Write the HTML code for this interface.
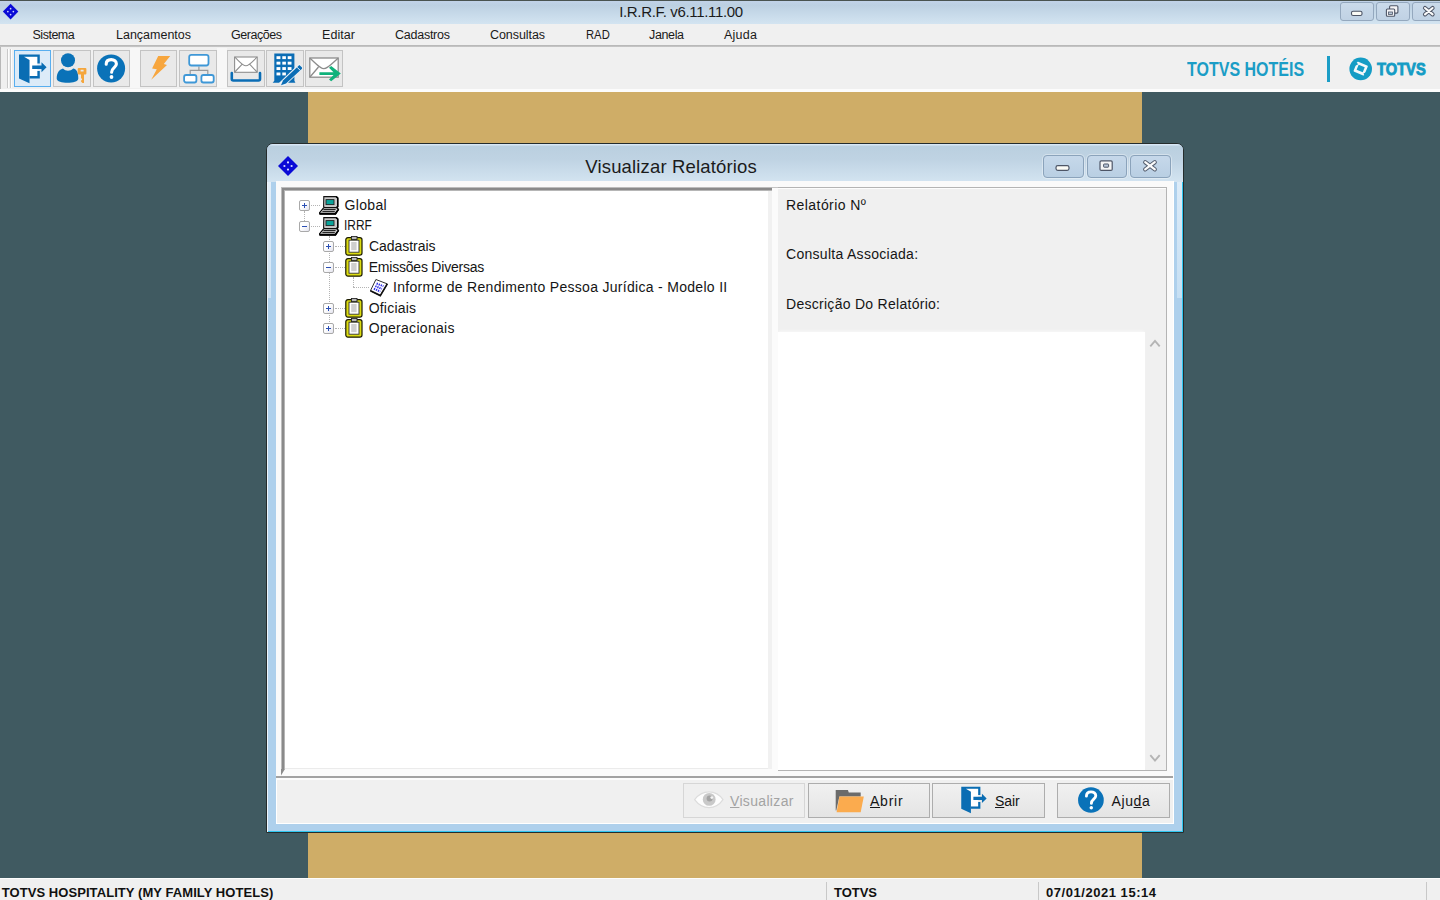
<!DOCTYPE html>
<html lang="pt-BR">
<head>
<meta charset="utf-8">
<title>I.R.R.F. v6.11.11.00</title>
<style>
*{box-sizing:border-box;margin:0;padding:0}
html,body{width:1440px;height:900px;overflow:hidden}
body{position:relative;background:#405a61;font-family:"Liberation Sans",sans-serif;color:#111;font-size:12px}
.abs{position:absolute}
.t{position:absolute;white-space:nowrap;line-height:1}
/* main title bar */
#topline{left:0;top:0;width:1440px;height:1px;background:#49534f}
#titlebar{left:0;top:1px;width:1440px;height:23px;background:linear-gradient(#c1d2e8 0%,#bcd0e1 18%,#c5d8e8 50%,#d3e4f1 100%)}
#apptitle{left:619.2px;top:4.4px;font-size:15px;color:#1b1b1b;letter-spacing:-.34px}
.cap{position:absolute;top:2px;height:19px;border:1px solid #94a8be;border-radius:3px;background:linear-gradient(#cadaea,#c0d2e4)}
/* menu */
#menubar{left:0;top:24px;width:1440px;height:22px;background:#f0f0f0}
#menubar .t{top:4.7px;font-size:12.5px;color:#1a1a1a}
#menusep{left:0;top:45px;width:1440px;height:2px;background:linear-gradient(#b4b4b4,#c9c9c9)}
#menusep2{left:0;top:47px;width:1440px;height:1px;background:#f8f8f8}
/* toolbar */
#toolbar{left:0;top:47px;width:1440px;height:42px;background:#f0f0f0}
#toolwhite{left:0;top:89px;width:1440px;height:3px;background:#fcfcfc}
.tb{position:absolute;top:3px;height:37px;width:37px;border:1px solid #c3c3c3;background:#e9e9e9}
.tb svg{position:absolute;left:0;top:0}
/* mdi */
#gold{left:308px;top:92px;width:834px;height:786px;background:#cfad67}
/* status */
#status{left:0;top:878px;width:1440px;height:22px;background:#f0f0f0;border-top:1px solid #fdfdfd}
#status .t{top:7px;font-size:13px;font-weight:bold;color:#111}
.ssep{position:absolute;top:3px;width:1px;height:19px;background:#c8c8c8}
/* dialog */
#dlg{left:266px;top:143px;width:918px;height:690px;border:1px solid #252c2c;border-radius:7px 7px 0 0;background:#aed0ec;overflow:hidden}
#dlgtitle{left:0;top:0;width:916px;height:38px;background:linear-gradient(#d8e7f5 0,#d8e7f5 1px,#bacfdf 2px,#bfd3e3 40%,#d3e4f1 100%)}
#dlgcap{left:585.3px;top:158px;font-size:18.5px;color:#1b1b1b;letter-spacing:.16px}
#client{left:9px;top:37px;width:898px;height:643px;background:#f0f0f0;border:1px solid #fff}
#toppanel{left:276px;top:181px;width:897px;height:595px;background:#fafafa}

/* tree */
#tree{left:281px;top:187px;width:491px;height:589px;background:#fff;border-style:solid;border-width:0 0 7px 0;border-color:#fbfbfb;box-shadow:inset 1px 1px 0 #bcbcbc,inset 3px 3px 0 #8a8a8a,inset 4px 4px 0 #b6b6b6}
#split{left:772px;top:187px;width:6px;height:589px;background:#fbfbfb}
.tx{position:absolute;white-space:nowrap;line-height:1;font-size:14px;color:#151515}
.eb{position:absolute;width:11px;height:11px;border:1px solid #a9a9a9;border-radius:2px;background:linear-gradient(135deg,#fff 40%,#e4e4ee)}
.eb:before{content:"";position:absolute;left:2px;top:4px;width:5px;height:1px;background:#2b4fb4}
.eb.p:after{content:"";position:absolute;left:4px;top:2px;width:1px;height:5px;background:#2b4fb4}
.dh{position:absolute;height:0;border-top:1px dotted #b4b4b4}
.dv{position:absolute;width:0;border-left:1px dotted #b4b4b4}
/* right */
#rp{left:778px;top:187px;width:389px;height:583.5px;background:#f0f0f0;border:1px solid #b4b4b4;border-left:none;box-shadow:inset 0 1px 0 #fdfdfd}
#memo{left:778px;top:331.5px;width:367px;height:438px;background:#fff;box-shadow:0 -2px 2px -1px #f8f8f8}
#hsep{left:276px;top:776px;width:897px;height:2px;background:#a2a2a2}
#hsep2{left:276px;top:778px;width:897px;height:2px;background:#fcfcfc}
/* buttons */
.btn{position:absolute;top:783px;height:35px;border:1px solid #adadad;background:linear-gradient(#f1f1f1,#e4e4e4)}
.btn.dis{border-color:#d6d6d6;background:#efefef}
.btn .tx{top:auto}

#lg1{left:1187px;top:12px;font-size:20px;font-weight:bold;color:#1b9dc6;transform-origin:0 0;transform:scaleX(.8)}
#lg2{left:1377px;top:14px;font-size:16.5px;font-weight:bold;color:#149cc5;-webkit-text-stroke:.9px #149cc5;transform-origin:0 0;transform:scaleX(.89)}
.gl{position:absolute}

.dcap{position:absolute;top:154.5px;width:40.5px;height:23px;border:1px solid #8ba3bb;border-radius:4px;background:linear-gradient(#c6d8ea,#b9cfe3);box-shadow:0 0 0 1px rgba(255,255,255,.35)}
</style>
</head>
<body>
<div class="abs" id="topline"></div>
<div class="abs" id="titlebar"></div>
<svg class="abs" style="left:1.9px;top:2.6px" width="17.2" height="17.2" viewBox="0 0 20 20"><path d="M10 .8L19 10L10 19.2L1 10Z" fill="#0a0ad6"/><g fill="#cfd6ff"><circle cx="10" cy="6.6" r="1"/><circle cx="6.8" cy="10" r="1"/><circle cx="13.2" cy="10" r="1"/><circle cx="10" cy="13.4" r="1"/></g></svg>
<div class="t" id="apptitle">I.R.R.F. v6.11.11.00</div>

<div class="cap" style="left:1340px;width:34px"></div>
<div class="cap" style="left:1376px;width:34px"></div>
<div class="cap" style="left:1412px;width:34px"></div>
<svg class="abs" style="left:1340px;top:2px" width="100" height="19" viewBox="1340 2 100 19">
<rect x="1351.5" y="11.2" width="10.5" height="4.3" rx="1.6" fill="#fbfbf6" stroke="#4d5566" stroke-width="1.1"/>
<g fill="#f4f4f6" stroke="#4d5566" stroke-width="1.1"><rect x="1389.6" y="5.8" width="8.3" height="7.3" rx="1"/><rect x="1386.4" y="9" width="8.3" height="7.3" rx="1"/></g><rect x="1388.6" y="12" width="3.9" height="2.4" fill="#b9c6d8" stroke="#4d5566" stroke-width=".8"/>
<path d="M1425 8L1432.6 14.4M1432.6 8L1425 14.4" stroke="#4d5566" stroke-width="4.1" stroke-linecap="round"/><path d="M1425 8L1432.6 14.4M1432.6 8L1425 14.4" stroke="#fbfbfb" stroke-width="2.1" stroke-linecap="round"/>
</svg>
<div class="abs" id="menubar">
<span class="t" style="left:32.5px;letter-spacing:-0.49px">Sistema</span>
<span class="t" style="left:116px">Lançamentos</span>
<span class="t" style="left:231px;letter-spacing:-0.46px">Gerações</span>
<span class="t" style="left:322px;letter-spacing:0.07px">Editar</span>
<span class="t" style="left:395px;letter-spacing:-0.25px">Cadastros</span>
<span class="t" style="left:490px;letter-spacing:-0.07px">Consultas</span>
<span class="t" style="left:585.7px;transform-origin:0 0;transform:scaleX(0.9)">RAD</span>
<span class="t" style="left:649px;letter-spacing:-0.37px">Janela</span>
<span class="t" style="left:724px;letter-spacing:0.25px">Ajuda</span>
</div>
<div class="abs" id="menusep"></div>
<div class="abs" id="menusep2"></div>
<div class="abs" id="toolbar">
<i class="abs" style="left:0;top:0;width:1px;height:42px;background:#b8b8b8"></i>
<i class="abs" style="left:7px;top:2px;width:2px;height:39px;background:linear-gradient(90deg,#c9c9c9 50%,#fdfdfd 50%)"></i>
<i class="abs" style="left:10px;top:2px;width:2px;height:39px;background:linear-gradient(90deg,#c9c9c9 50%,#fdfdfd 50%)"></i>
<div class="tb" style="left:13.9px;width:37.10px;border-color:#58aeef;background:#dcebf8">
<svg style="left:0px" width="35" height="35" viewBox="1 1 35 35"><g fill="#0a6db3"><path d="M10 6.8H23.4V26H15.5V10Z" fill="#fff"/><path d="M5 4.5H25.8V13.5H23.4V6.8H10L15.5 10V33.3L5 28.4Z"/><path d="M23.4 21.1H25.8V28.4H15.5V26H23.4Z"/><path d="M18.2 15.5H27.5V12.3L32.6 17.3L27.5 22.2V19H18.2Z"/></g></svg>
</div>
<div class="tb" style="left:53.25px;width:37.45px">
<svg style="left:1px" width="35" height="35" viewBox="1 1 35 35"><circle cx="14" cy="10.3" r="7" fill="#0a72b8"/><path d="M2.7 28.5C2.7 22 6 19.5 9 18.6C10.5 20.2 12 20.8 14 20.8C16 20.8 17.7 20.2 19.2 18.6C22 19.4 24.3 21 24.3 28.5C24.3 31.5 19 32.8 13.5 32.8C8 32.8 2.7 31.5 2.7 28.5Z" fill="#0a72b8"/><path d="M24.7 18H31.4Q32.4 18 32.4 19V23.6Q32.4 24.6 31.4 24.6H30V33H28.4L27 31.6V30.2H28V28.6H27V24.6H24.7Q23.7 24.6 23.7 23.6V19Q23.7 18 24.7 18ZM26.6 19.8V21.6H29.6V19.8Z" fill="#f5a63c" fill-rule="evenodd"/></svg>
</div>
<div class="tb" style="left:92.6px;width:37.00px">
<svg style="left:0px" width="35" height="35" viewBox="1 1 35 35"><circle cx="18.1" cy="18.5" r="14" fill="#0a72b8"/><path d="M13.2 14.3C13.2 11 15.5 9.6 18.2 9.6C21.2 9.6 23.4 11.3 23.4 14C23.4 17.6 18.6 17.8 18.6 22.2" fill="none" stroke="#fff" stroke-width="3.1" stroke-linecap="round"/><circle cx="18.5" cy="27" r="1.9" fill="#fff"/></svg>
</div>
<i class="abs" style="left:130px;top:1px;width:10px;height:40px;background:#f7f7f7"></i><i class="abs" style="left:217px;top:1px;width:10px;height:40px;background:#f7f7f7"></i>
<div class="tb" style="left:140.0px;width:37.20px">
<svg style="left:0.5px" width="35" height="35" viewBox="1 1 35 35"><path d="M17.2 5.9H29.2L22.8 14.1L26 15L10.2 29.8L15.8 19.3L11.1 18.5Z" fill="#f7a63e"/></svg>
</div>
<div class="tb" style="left:179.0px;width:37.50px">
<svg style="left:0.5px" width="35" height="35" viewBox="1 1 35 35"><path d="M18.9 16.4V20.3M10.2 24.1V20.3H27.8V24.1" fill="none" stroke="#9a9a9a" stroke-width="1.2"/><g fill="#fff" stroke="#3f98d7" stroke-width="1.8"><rect x="9.2" y="4.9" width="19.3" height="10.6" rx="2.2"/><rect x="4.1" y="25" width="12.3" height="7.5" rx="2"/><rect x="21.4" y="25" width="12.3" height="7.5" rx="2"/></g></svg>
</div>
<div class="tb" style="left:226.9px;width:37.80px">
<svg style="left:0.4px" width="35" height="35" viewBox="1 1 35 35"><rect x="7.6" y="7" width="22.6" height="15.3" fill="#fff" stroke="#8f8f8f" stroke-width="1.1"/><path d="M7.8 7.2C12 11 15.5 15.8 18.9 15.8C22.3 15.8 26 11 30 7.2M7.8 22L15 14.3M30 22L22.8 14.3" fill="none" stroke="#8f8f8f" stroke-width="1.1"/><path d="M4.8 23V29Q4.8 30.5 6.3 30.5H31.5Q33 30.5 33 29V23" fill="none" stroke="#0b6db5" stroke-width="2.6" stroke-linecap="round"/></svg>
</div>
<div class="tb" style="left:265.9px;width:38.40px">
<svg style="left:0.4px" width="35" height="35" viewBox="1 1 35 35"><path d="M8.3 3.4H28.4V30.8L29.4 32.7H6.7L8.3 30.8Z" fill="#0b6db5"/><g fill="#fff"><rect x="10.5" y="6.2" width="3.9" height="2.9"/><rect x="16.3" y="6.2" width="3.6" height="2.9"/><rect x="21.7" y="6.2" width="3.8" height="2.9"/><rect x="10.5" y="11.7" width="3.9" height="2.9"/><rect x="16.3" y="11.7" width="3.6" height="2.9"/><rect x="21.7" y="11.7" width="3.8" height="2.9"/><rect x="10.5" y="17.1" width="3.9" height="2.9"/><rect x="16.3" y="17.1" width="3.6" height="2.9"/><rect x="21.7" y="17.1" width="3.8" height="2.9"/><rect x="10.5" y="22.5" width="3.9" height="2.9"/><rect x="16.3" y="22.5" width="3.6" height="2.9"/></g><path d="M15.3 35L35.4 15.8" stroke="#eef3f8" stroke-width="6.2" stroke-linecap="butt"/><path d="M15 35.3L17 30.6L33.4 15L36.6 18.2L20 33.6Z" fill="#0b6db5"/><path d="M31 17.2L34.3 20.5" stroke="#eef3f8" stroke-width="1"/></svg>
</div>
<div class="tb" style="left:305.2px;width:38.00px">
<svg style="left:0.7px" width="35" height="35" viewBox="1 1 35 35"><rect x="3.8" y="8" width="28.4" height="19.2" fill="#fff" stroke="#8c8c8c" stroke-width="1.3"/><path d="M4 8.2C9 12.5 14 18.7 17.9 18.7C21.8 18.7 27 12.5 32 8.2M4 27L12.5 17" fill="none" stroke="#8c8c8c" stroke-width="1.3"/><path d="M13.4 22.2H27.5L23 17.8L25.2 15.9L34.8 23.6L25.2 31.3L23 29.4L27.5 25.1H13.4Z" fill="#10b27b"/></svg>
</div>
<span class="t" id="lg1">TOTVS HOTÉIS</span>
<i class="abs" style="left:1327px;top:9px;width:3px;height:26px;background:#1b9dc6"></i>
<svg class="abs" style="left:1347px;top:9px" width="28" height="28" viewBox="0 0 28 28"><circle cx="13.7" cy="12.9" r="11.3" fill="#149cc5"/><g transform="rotate(22 13.7 12.6)"><rect x="7.9" y="7.2" width="11.6" height="10.8" rx="1" fill="#f4f8fa"/><rect x="10.4" y="9.900" width="6.6" height="5.4" fill="#149cc5"/></g><path d="M6.500 9.200L10.500 7.400M17 18.500L21 16.600" stroke="#149cc5" stroke-width="2.2"/></svg>
<span class="t" id="lg2">TOTVS</span>

</div>
<div class="abs" id="toolwhite"></div>

<div class="abs" id="gold"></div>

<div class="abs" id="dlg">
<div class="abs" id="dlgtitle"></div>
<i class="abs" style="left:915px;top:38px;width:1px;height:651px;background:#2fc6f0"></i>
<i class="abs" style="left:1px;top:687px;width:915px;height:1px;background:#2fc6f0"></i>
<i class="abs" style="left:0;top:38px;width:1px;height:650px;background:#eef5fb"></i>
<i class="abs" style="left:1px;top:38px;width:3px;height:116px;background:linear-gradient(#e4eff9,#d0e4f5)"></i>
<i class="abs" style="left:910px;top:38px;width:5px;height:116px;background:linear-gradient(#dcebf8,#c6dff3)"></i>
<div class="abs" id="client"></div>
<div class="abs" id="pg" style="left:-267px;top:-144px;width:1440px;height:900px">
<div class="t" id="dlgcap">Visualizar Relatórios</div>
<svg class="abs" style="left:277px;top:155px" width="22" height="22" viewBox="0 0 22 22"><path d="M11 1L21 11L11 21L1 11Z" fill="#0a0ad6"/><g fill="#d5dbff"><circle cx="11" cy="7.4" r="1.1"/><circle cx="7.4" cy="11" r="1.1"/><circle cx="14.6" cy="11" r="1.1"/><circle cx="11" cy="14.6" r="1.1"/></g></svg>
<div class="dcap" style="left:1043px"></div><div class="dcap" style="left:1086.5px"></div><div class="dcap" style="left:1130px"></div>
<svg class="abs" style="left:1043px;top:154px" width="128" height="24" viewBox="1043 154 128 24">
<rect x="1056" y="165.6" width="13" height="4.8" rx="1.8" fill="#fbfbf6" stroke="#4d5566" stroke-width="1.2"/>
<rect x="1100" y="160.8" width="12.2" height="9.6" rx="1.2" fill="#f6f6f6" stroke="#4d5566" stroke-width="1.2"/><rect x="1103.6" y="164" width="5" height="3.2" rx=".6" fill="#b9c6d8" stroke="#4d5566" stroke-width="1"/>
<path d="M1145.2 162.200L1154.800 169.400M1154.8 162.200L1145.200 169.400" stroke="#566070" stroke-width="4.2" stroke-linecap="round"/><path d="M1145.2 162.200L1154.800 169.400M1154.8 162.200L1145.200 169.400" stroke="#fbfbfb" stroke-width="2.2" stroke-linecap="round"/>
</svg>

<div class="abs" id="toppanel"></div>
<div class="abs" id="tree"></div>
<div class="abs" id="split"></div>
<i class="abs" style="left:285px;top:767.5px;width:483px;height:1.5px;background:#ebebeb"></i>
<svg class="abs" style="left:281px;top:769px" width="5" height="7" viewBox="0 0 5 7"><path d="M0 0H4L0 6.500Z" fill="#8c8c8c"/></svg>
<i class="abs" style="left:768px;top:191px;width:4px;height:578px;background:#f1f1f1"></i>
<i class="dv" style="left:304px;top:211px;height:10px"></i>
<i class="dh" style="left:311px;top:205px;width:9px"></i>
<i class="dh" style="left:311px;top:226px;width:9px"></i>
<i class="dv" style="left:329px;top:236px;height:92px"></i>
<i class="dh" style="left:335px;top:246px;width:10px"></i>
<i class="dh" style="left:335px;top:267px;width:10px"></i>
<i class="dh" style="left:335px;top:308px;width:10px"></i>
<i class="dh" style="left:335px;top:328px;width:10px"></i>
<i class="dv" style="left:353px;top:277px;height:10px"></i>
<i class="dh" style="left:353px;top:287px;width:16px"></i>
<i class="eb p" style="left:299px;top:200px"></i>
<i class="eb" style="left:299px;top:221px"></i>
<i class="eb p" style="left:323px;top:241px"></i>
<i class="eb" style="left:323px;top:262px"></i>
<i class="eb p" style="left:323px;top:303px"></i>
<i class="eb p" style="left:323px;top:323px"></i>
<svg class="abs" style="left:319px;top:196px" width="21" height="19" viewBox="0 0 21 19"><path d="M4.8 .6H17.2L18.6 2V10.4L17.4 11.6H5.6L4.6 10.6Z" fill="#c9c9c9" stroke="#111" stroke-width="1.1"/><path d="M17.2 .6L18.8 2V10.6L17.4 11.8" fill="none" stroke="#000" stroke-width="1.6"/><rect x="7" y="3.6" width="8" height="5" fill="#0aa39a" stroke="#222" stroke-width=".9"/><path d="M4.6 11.8H17.6L19.6 13.2L16.6 18.2H.8L.4 16.8Z" fill="#d6d6d6" stroke="#000" stroke-width="1.1"/><path d="M4.4 13.6H16.6M3.4 15.4H15.8" stroke="#111" stroke-width="1"/><path d="M1 17.6H16.4L19.4 13.4" fill="none" stroke="#000" stroke-width="1.7"/></svg>
<svg class="abs" style="left:319px;top:216.5px" width="21" height="19" viewBox="0 0 21 19"><path d="M4.8 .6H17.2L18.6 2V10.4L17.4 11.6H5.6L4.6 10.6Z" fill="#c9c9c9" stroke="#111" stroke-width="1.1"/><path d="M17.2 .6L18.8 2V10.6L17.4 11.8" fill="none" stroke="#000" stroke-width="1.6"/><rect x="7" y="3.6" width="8" height="5" fill="#0aa39a" stroke="#222" stroke-width=".9"/><path d="M4.6 11.8H17.6L19.6 13.2L16.6 18.2H.8L.4 16.8Z" fill="#d6d6d6" stroke="#000" stroke-width="1.1"/><path d="M4.4 13.6H16.6M3.4 15.4H15.8" stroke="#111" stroke-width="1"/><path d="M1 17.6H16.4L19.4 13.4" fill="none" stroke="#000" stroke-width="1.7"/></svg>
<svg class="abs" style="left:344.5px;top:236.3px" width="18" height="20" viewBox="0 0 18 20"><rect x=".8" y="1.6" width="16.2" height="17.6" rx="2.2" fill="#dcdc10" stroke="#1a1a00" stroke-width="1.2"/><rect x="4" y="4.2" width="10" height="12" fill="#fff" stroke="#333" stroke-width=".9"/><rect x="6.2" y="6" width="5.4" height="8.2" fill="#cfcfcf"/><rect x="6.4" y=".4" width="5.6" height="3.2" fill="#b9b9b9" stroke="#222" stroke-width=".9"/></svg>
<svg class="abs" style="left:344.5px;top:256.6px" width="18" height="20" viewBox="0 0 18 20"><rect x=".8" y="1.6" width="16.2" height="17.6" rx="2.2" fill="#dcdc10" stroke="#1a1a00" stroke-width="1.2"/><rect x="4" y="4.2" width="10" height="12" fill="#fff" stroke="#333" stroke-width=".9"/><rect x="6.2" y="6" width="5.4" height="8.2" fill="#cfcfcf"/><rect x="6.4" y=".4" width="5.6" height="3.2" fill="#b9b9b9" stroke="#222" stroke-width=".9"/></svg>
<svg class="abs" style="left:344.5px;top:297.8px" width="18" height="20" viewBox="0 0 18 20"><rect x=".8" y="1.6" width="16.2" height="17.6" rx="2.2" fill="#dcdc10" stroke="#1a1a00" stroke-width="1.2"/><rect x="4" y="4.2" width="10" height="12" fill="#fff" stroke="#333" stroke-width=".9"/><rect x="6.2" y="6" width="5.4" height="8.2" fill="#cfcfcf"/><rect x="6.4" y=".4" width="5.6" height="3.2" fill="#b9b9b9" stroke="#222" stroke-width=".9"/></svg>
<svg class="abs" style="left:344.5px;top:318.2px" width="18" height="20" viewBox="0 0 18 20"><rect x=".8" y="1.6" width="16.2" height="17.6" rx="2.2" fill="#dcdc10" stroke="#1a1a00" stroke-width="1.2"/><rect x="4" y="4.2" width="10" height="12" fill="#fff" stroke="#333" stroke-width=".9"/><rect x="6.2" y="6" width="5.4" height="8.2" fill="#cfcfcf"/><rect x="6.4" y=".4" width="5.6" height="3.2" fill="#b9b9b9" stroke="#222" stroke-width=".9"/></svg>
<svg class="abs" style="left:369px;top:278px" width="20" height="19" viewBox="0 0 20 19"><path d="M6.9 1.5L18.3 5.9L11.3 17.6L1.4 12.8Z" fill="#fff" stroke="#333" stroke-width="1"/><path d="M18.3 5.9L11.3 17.6L1.4 12.8" fill="none" stroke="#111" stroke-width="1.7"/><path d="M7.6 5.5L14.4 8.2M6.3 8.1L12.9 10.9M4.9 10.7L11.3 13.6" stroke="#2a2ae6" stroke-width="2" stroke-dasharray="1.3 .9" fill="none"/></svg>

<span class="tx" style="left:344.4px;top:198.4px;letter-spacing:0.37px">Global</span>
<span class="tx" style="left:344.4px;top:218.4px;transform-origin:0 0;transform:scaleX(0.85)">IRRF</span>
<span class="tx" style="left:368.9px;top:239.4px;letter-spacing:-0.04px">Cadastrais</span>
<span class="tx" style="left:368.7px;top:260.4px;letter-spacing:-0.21px">Emissões Diversas</span>
<span class="tx" style="left:393px;top:280.4px;letter-spacing:0.3px">Informe de Rendimento Pessoa Jurídica - Modelo II</span>
<span class="tx" style="left:368.7px;top:301.4px;letter-spacing:0.2px">Oficiais</span>
<span class="tx" style="left:368.7px;top:321.4px;letter-spacing:0.3px">Operacionais</span>

<i class="abs" style="left:772px;top:187px;width:6px;height:1px;background:#c4c4c4"></i>
<div class="abs" id="rp"></div>
<div class="abs" id="memo"></div>
<span class="tx" style="left:786px;top:198.4px;letter-spacing:0.44px">Relatório Nº</span>
<span class="tx" style="left:786px;top:247.4px;letter-spacing:0.29px">Consulta Associada:</span>
<span class="tx" style="left:786px;top:297.4px;letter-spacing:0.28px">Descrição Do Relatório:</span>
<svg class="abs" style="left:1149px;top:338px" width="12" height="10" viewBox="0 0 12 10"><path d="M1.3 8.4 L6 3 L10.7 8.4" fill="none" stroke="#b4b4b4" stroke-width="1.9"/></svg>
<svg class="abs" style="left:1149px;top:753px" width="12" height="10" viewBox="0 0 12 10"><path d="M1.3 2.2 L6 7.6 L10.7 2.2" fill="none" stroke="#b4b4b4" stroke-width="1.9"/></svg>
<div class="abs" id="hsep"></div>
<div class="abs" id="hsep2"></div>

<div class="btn dis" style="left:683px;width:122px"></div>
<div class="btn" style="left:808px;width:122px"></div>
<div class="btn" style="left:932px;width:113px"></div>
<div class="btn" style="left:1057px;width:113px"></div>
<span class="tx" style="left:730px;top:794.4px;color:#a3a3a3;letter-spacing:0.33px"><u>V</u>isualizar</span>
<span class="tx" style="left:870px;top:794.4px;letter-spacing:0.76px"><u>A</u>brir</span>
<span class="tx" style="left:995px;top:794.4px;letter-spacing:-0.07px"><u>S</u>air</span>
<span class="tx" style="left:1111.6px;top:794.4px;letter-spacing:0.57px">Aju<u>d</u>a</span>
<svg class="abs" style="left:683px;top:783px" width="490" height="36" viewBox="683 783 490 36">
<path d="M694.6 799.6C699 793.600 704 791.800 709 791.800C714 791.800 719 793.600 723 799.600C719 805.400 714 807.600 709 807.600C704 807.600 699 805.400 694.600 799.600Z" fill="#fdfdfd" stroke="#dcdcdc" stroke-width="1.2"/><circle cx="709.2" cy="799.4" r="6.4" fill="#c9c9c9"/><circle cx="709.6" cy="798.6" r="3" fill="#a4a4a4"/><circle cx="711.8" cy="797.6" r="1.4" fill="#f4f4f4"/>
<path d="M835.7 790H847.9L848.8 792.5H860.7V796.6H839.4L836.3 810.600H835.700Z" fill="#6b6b6b"/><path d="M839.4 796.6H863.8L860.7 812.2H836.6Z" fill="#fbab4e"/>
<g transform="translate(956.65 782.5) scale(.92)"><g fill="#0a6db3"><path d="M10 6.8H23.4V26H15.5V10Z" fill="#fff"/><path d="M5 4.5H25.8V13.5H23.4V6.8H10L15.5 10V33.3L5 28.4Z"/><path d="M23.4 21.1H25.8V28.4H15.5V26H23.4Z"/><path d="M18.2 15.5H27.500V12.3L32.6 17.3L27.5 22.2V19H18.2Z"/></g></g>
<g transform="translate(1074.3 783) scale(.918)"><circle cx="18.1" cy="18.5" r="14" fill="#0a72b8"/><path d="M13.2 14.3C13.2 11 15.5 9.6 18.2 9.6C21.2 9.6 23.4 11.3 23.4 14C23.4 17.6 18.6 17.8 18.6 22.2" fill="none" stroke="#fff" stroke-width="3.1" stroke-linecap="round"/><circle cx="18.5" cy="27" r="1.900" fill="#fff"/></g>
</svg>


</div>
</div>

<div class="abs" id="status">
<span class="t" style="left:1.7px;letter-spacing:0.07px">TOTVS HOSPITALITY (MY FAMILY HOTELS)</span>
<span class="t" style="left:834px;letter-spacing:-0.03px">TOTVS</span>
<span class="t" style="left:1046px;letter-spacing:0.54px">07/01/2021 15:14</span>
<i class="ssep" style="left:826px"></i>
<i class="ssep" style="left:1038px"></i>
<i class="ssep" style="left:1426px"></i>
</div>
</body>
</html>
